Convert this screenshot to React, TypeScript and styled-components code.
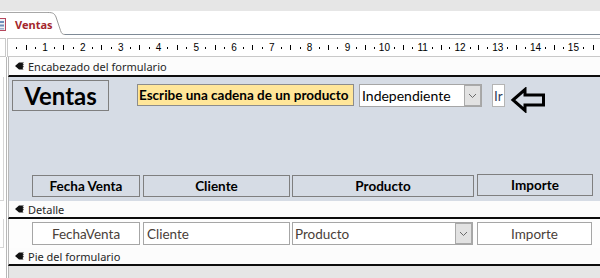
import React from "react";
import styled, { createGlobalStyle } from "styled-components";

const Global = createGlobalStyle`
  html, body { margin: 0; padding: 0; }
  body {
    width: 600px;
    height: 278px;
    overflow: hidden;
    background: #ffffff;
    font-family: Lato, "Noto Sans", sans-serif;
  }
  * { box-sizing: border-box; }
`;

const Screen = styled.div`
  width: 600px;
  height: 278px;
  display: flex;
  flex-direction: column;
  overflow: hidden;
  background: #ffffff;
`;

const TopBand = styled.div`
  height: 11px;
  flex-shrink: 0;
  background: #e6e6e6;
`;

const TabStrip = styled.div`
  height: 24px;
  flex-shrink: 0;
  display: flex;
  align-items: flex-end;
  background: #ffffff;
`;

const Tab = styled.div`
  width: 48px;
  height: 23px;
  flex-shrink: 0;
  border-top: 1px solid #a8a8a8;
  display: flex;
  align-items: center;
  gap: 9px;
  overflow: visible;
  position: relative;
  z-index: 1;
`;

const TabIcon = styled.svg`
  margin-left: -7px;
  flex-shrink: 0;
`;

const TabLabel = styled.span`
  font-family: "Noto Sans", sans-serif;
  font-weight: 700;
  font-size: 11px;
  color: #a4262c;
  margin-top: 1px;
  white-space: nowrap;
  flex-shrink: 0;
`;

const TabCurve = styled.svg`
  flex-shrink: 0;
  display: block;
`;

const TabFill = styled.div`
  flex: 1;
  height: 23px;
  border-bottom: 1px solid #7e8a96;
`;

const Spacer = styled.div`
  height: 3px;
  flex-shrink: 0;
`;

const RulerRow = styled.div`
  height: 19px;
  flex-shrink: 0;
  display: flex;
`;

const RulerCorner = styled.div`
  width: 6px;
  border: 1px solid #c9c9c9;
  border-left: none;
`;

const Ruler = styled.div`
  flex: 1;
  margin-left: 1px;
  border: 1px solid #c9c9c9;
  border-right: none;
  display: flex;
  align-items: center;
  padding-left: 4px;
  overflow: hidden;
`;

const RulerCm = styled.div`
  width: 37.8px;
  flex-shrink: 0;
  display: grid;
  grid-template-columns: repeat(4, 1fr);
  align-items: center;
  justify-items: center;
`;

const Dot = styled.i`
  display: block;
  width: 1px;
  height: 2px;
  background: #000;
`;

const Tick = styled.i`
  display: block;
  width: 1px;
  height: 5px;
  background: #000;
`;

const RulerNum = styled.span`
  font-family: "Liberation Sans", Arial, sans-serif;
  font-size: 10px;
  line-height: 1;
  color: #000;
`;

const Designer = styled.div`
  flex: 1;
  display: flex;
  flex-direction: column;
`;

const SectionRow = styled.div<{ $grow?: boolean }>`
  display: flex;
  flex-shrink: 0;
  ${(p) => (p.$grow ? "flex: 1;" : "")}
`;

const LeftCell = styled.div`
  width: 7px;
  flex-shrink: 0;
  background: #ffffff;
  border-right: 1px solid #b8b8b8;
  display: flex;
`;

const LeftMark = styled.div`
  width: 4px;
  border-right: 1px solid #d6d6d6;
  border-bottom: 1px solid #d6d6d6;
`;

const Content = styled.div`
  flex: 1;
  margin-left: 1px;
  border-left: 1px solid #b8b8b8;
  min-width: 0;
`;

const SectionBar = styled(Content)<{ $h: number }>`
  height: ${(p) => p.$h + 2}px;
  background: #fcfcfc;
  border-bottom: 2px solid #0d0d0d;
  display: flex;
  align-items: center;
  gap: 4px;
  padding-left: 6px;
  font-family: "Noto Sans", sans-serif;
  font-size: 11px;
  color: #262626;
`;

const HeaderBody = styled(Content)`
  height: 124px;
  background: #d6dce5;
  display: flex;
  flex-direction: column;
  justify-content: space-between;
  padding: 3px 0 4px 0;
`;

const DetailBody = styled(Content)`
  height: 29px;
  background: #fdfdfd;
  padding-top: 3px;
`;

const GrayFill = styled(Content)`
  background: #e6e6e6;
`;

const ControlRow = styled.div`
  display: flex;
  align-items: flex-start;
`;

const TitleLabel = styled.div`
  margin-left: 3px;
  width: 97px;
  height: 31px;
  border: 1px solid #7f7f7f;
  display: flex;
  align-items: center;
  justify-content: center;
  font-weight: 700;
  font-size: 24px;
  color: #000;
  padding-bottom: 1px;
`;

const PromptLabel = styled.div`
  margin-left: 28px;
  margin-top: 4px;
  width: 217px;
  height: 22px;
  background: #ffe699;
  border: 1px solid #8c8c8c;
  display: flex;
  align-items: center;
  padding-left: 1px;
  font-weight: 700;
  font-size: 13.5px;
  color: #000;
  white-space: nowrap;
  overflow: hidden;
`;

const Combo = styled.div<{ $ml: number; $w: number; $mt?: number }>`
  margin-left: ${(p) => p.$ml}px;
  margin-top: ${(p) => p.$mt ?? 0}px;
  width: ${(p) => p.$w}px;
  height: 23px;
  background: #fff;
  border: 1px solid #a6a6a6;
  display: flex;
`;

const ComboText = styled.div<{ $dark?: boolean }>`
  flex: 1;
  display: flex;
  align-items: center;
  padding-left: 2px;
  font-size: ${(p) => (p.$dark ? 14 : 13.5)}px;
  color: ${(p) => (p.$dark ? "#000" : "#4a4039")};
  white-space: nowrap;
  overflow: hidden;
`;

const DropButton = styled.div`
  width: 17px;
  flex-shrink: 0;
  background: #e2e2e2;
  border: 1px solid #a9a9a9;
  display: flex;
  align-items: center;
  justify-content: center;
`;

const IrBox = styled.div`
  margin-left: 10px;
  margin-top: 4px;
  width: 13px;
  height: 23px;
  background: #fff;
  border: 1px solid #b4b4b4;
  overflow: hidden;
  display: flex;
  align-items: center;
  padding-left: 1px;
  font-size: 13.5px;
  color: #2f4160;
  white-space: nowrap;
`;

const Arrow = styled.svg`
  margin-left: 5px;
  margin-top: 7px;
  flex-shrink: 0;
`;

const ColHeader = styled.div<{ $ml: number; $w: number; $up?: boolean }>`
  margin-left: ${(p) => p.$ml}px;
  width: ${(p) => p.$w}px;
  height: 22px;
  margin-top: ${(p) => (p.$up ? -1 : 0)}px;
  border: 1px solid #7f7f7f;
  display: flex;
  align-items: center;
  justify-content: center;
  font-weight: 700;
  font-size: 13.5px;
  color: #000;
`;

const FieldBox = styled.div<{ $ml: number; $w: number; $left?: boolean }>`
  margin-left: ${(p) => p.$ml}px;
  width: ${(p) => p.$w}px;
  height: 23px;
  background: #fff;
  border: 1px solid #a6a6a6;
  display: flex;
  align-items: center;
  justify-content: ${(p) => (p.$left ? "flex-start" : "center")};
  padding-left: ${(p) => (p.$left ? 3 : 0)}px;
  font-size: 13.5px;
  color: #4a4039;
  white-space: nowrap;
`;

const Chevron = () => (
  <svg width="9" height="6" viewBox="0 0 9 6">
    <path d="M1 1 L4.5 4.5 L8 1" fill="none" stroke="#6a6a6a" strokeWidth="1" />
  </svg>
);

const SectionIcon = () => (
  <svg width="9" height="8" viewBox="0 0 9 8">
    <path
      d="M0 4 L4 0.5 L9 0.5 L7.5 2 L9 2.5 L7.5 4 L9 4.5 L7.5 6 L8.5 7.5 L4 7.5 Z"
      fill="#111"
    />
  </svg>
);

const RulerScale = () => (
  <Ruler>
    {Array.from({ length: 15 }, (_, i) => (
      <RulerCm key={i}>
        <Dot />
        <Tick />
        <Dot />
        <RulerNum>{i + 1}</RulerNum>
      </RulerCm>
    ))}
    <RulerCm>
      <Dot />
      <Tick />
      <Dot />
    </RulerCm>
  </Ruler>
);

export default function App() {
  return (
    <Screen>
      <Global />
      <TopBand />
      <TabStrip>
        <Tab>
          <TabIcon width="13" height="13" viewBox="0 0 13 13">
            <rect x="0.5" y="0.5" width="12" height="12" fill="#eef2f7" stroke="#b5475c" />
            <rect x="2" y="3" width="9" height="2" fill="#6f8fba" />
            <rect x="2" y="6.5" width="9" height="2" fill="#6f8fba" />
            <rect x="2" y="10" width="9" height="1.5" fill="#9aaecb" />
          </TabIcon>
          <TabLabel>Ventas</TabLabel>
        </Tab>
        <TabCurve width="17" height="23" viewBox="0 0 17 23">
          <path
            d="M0 0.5 C5 0.5 6.5 1.5 8 5 L12.5 18.5 C13.5 21.5 14.5 22.5 17 22.5"
            fill="none"
            stroke="#9a9a9a"
            strokeWidth="1"
          />
        </TabCurve>
        <TabFill />
      </TabStrip>
      <Spacer />
      <RulerRow>
        <RulerCorner />
        <RulerScale />
      </RulerRow>
      <Designer>
        <SectionRow>
          <LeftCell />
          <SectionBar $h={18}>
            <SectionIcon />
            Encabezado del formulario
          </SectionBar>
        </SectionRow>
        <SectionRow>
          <LeftCell>
            <LeftMark />
          </LeftCell>
          <HeaderBody>
            <ControlRow>
              <TitleLabel>Ventas</TitleLabel>
              <PromptLabel>Escribe una cadena de un producto</PromptLabel>
              <Combo $ml={5} $w={123} $mt={4}>
                <ComboText $dark>Independiente</ComboText>
                <DropButton>
                  <Chevron />
                </DropButton>
              </Combo>
              <IrBox>Ir</IrBox>
              <Arrow width="36" height="26" viewBox="0 0 36 26">
                <path
                  d="M3 13 L15 2.5 L15 8 L33.5 8 L33.5 18 L15 18 L15 23.5 Z"
                  fill="none"
                  stroke="#000"
                  strokeWidth="3"
                  strokeLinejoin="miter"
                />
              </Arrow>
            </ControlRow>
            <ControlRow>
              <ColHeader $ml={23} $w={108}>Fecha Venta</ColHeader>
              <ColHeader $ml={3} $w={147}>Cliente</ColHeader>
              <ColHeader $ml={2} $w={182}>Producto</ColHeader>
              <ColHeader $ml={3} $w={116} $up>Importe</ColHeader>
            </ControlRow>
          </HeaderBody>
        </SectionRow>
        <SectionRow>
          <LeftCell />
          <SectionBar $h={16}>
            <SectionIcon />
            Detalle
          </SectionBar>
        </SectionRow>
        <SectionRow>
          <LeftCell>
            <LeftMark />
          </LeftCell>
          <DetailBody>
            <ControlRow>
              <FieldBox $ml={23} $w={108}>FechaVenta</FieldBox>
              <FieldBox $ml={3} $w={147} $left>Cliente</FieldBox>
              <Combo $ml={2} $w={181}>
                <ComboText>Producto</ComboText>
                <DropButton>
                  <Chevron />
                </DropButton>
              </Combo>
              <FieldBox $ml={4} $w={115}>Importe</FieldBox>
            </ControlRow>
          </DetailBody>
        </SectionRow>
        <SectionRow>
          <LeftCell />
          <SectionBar $h={16}>
            <SectionIcon />
            Pie del formulario
          </SectionBar>
        </SectionRow>
        <SectionRow $grow>
          <LeftCell />
          <GrayFill />
        </SectionRow>
      </Designer>
    </Screen>
  );
}
